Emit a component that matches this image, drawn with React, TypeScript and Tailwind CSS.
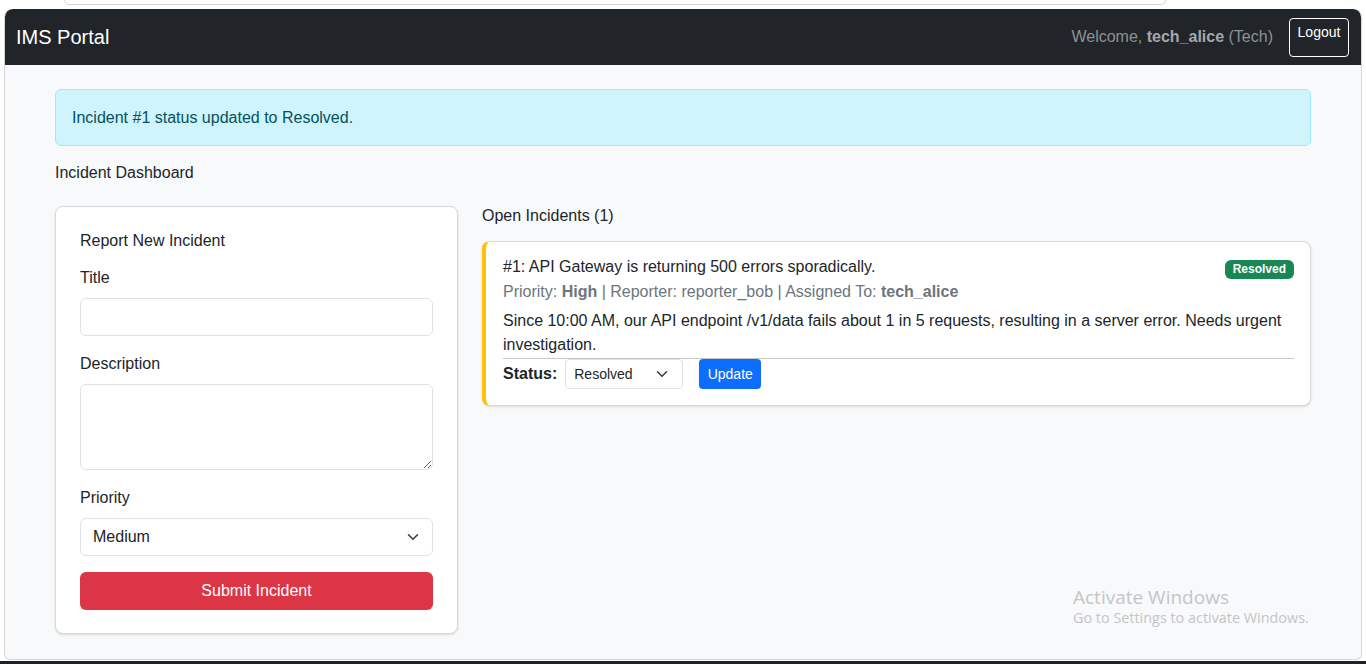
import React from "react";

const chevron = (size: number) => (
  <svg width={size} height={size} viewBox="0 0 16 16" fill="none">
    <path d="m2 5 6 6 6-6" stroke="#343a40" strokeWidth="2" strokeLinecap="round" strokeLinejoin="round" />
  </svg>
);

function Field({ label, children, mb }: { label: string; children: React.ReactNode; mb: string }) {
  return (
    <div className={mb}>
      <div className="pt-[1px] mb-[8px] leading-6">{label}</div>
      {children}
    </div>
  );
}

export default function App() {
  return (
    <div
      className="relative h-[664px] w-[1366px] overflow-hidden bg-white flex flex-col text-[#212529]"
      style={{ fontFamily: '"Liberation Sans", Arial, sans-serif' }}
    >
      {/* browser chrome edge */}
      <div className="h-[9px]">
        <div className="ml-[64px] w-[1102px] h-[5px] border border-t-0 border-[#d4d4d4] rounded-b-[10px]" />
      </div>

      <div className="mx-[4px] h-[651px] rounded-t-lg rounded-b-md border border-t-0 border-[#d6d6d6] bg-[#f8f9fa] flex flex-col overflow-hidden">
        <nav className="h-[56px] bg-[#212529] flex items-center justify-between pl-[11px] pr-[12px] rounded-t-lg">
          <div className="text-white text-[20px]">IMS Portal</div>
          <div className="flex items-center gap-4">
            <span className="text-[16px] text-[#8f9194]">
              Welcome, <b className="text-[#a5a7aa]">tech_alice</b> (Tech)
            </span>
            <button className="w-[60px] h-[39px] border border-white rounded text-white text-[14px] leading-[20px] flex items-start justify-center pt-[3px]">
              Logout
            </button>
          </div>
        </nav>

        <div className="pl-[50px] pr-[50px] pt-[24px]">
          <div className="h-[57px] rounded-md border border-[#9eeaf9] bg-[#cff4fc] text-[#055160] px-4 flex items-center">
            Incident #1 status updated to Resolved.
          </div>
          <div className="mt-[15px] leading-6">Incident Dashboard</div>

          <div className="flex gap-[24px] mt-[21px]">
            <div className="w-[403px] shrink-0">
              <div className="h-[428px] bg-white border border-[#d7d9db] rounded-lg shadow-sm px-[24px] pt-[22px]">
                <div className="leading-6 mb-[12px]">Report New Incident</div>
                <Field label="Title" mb="mb-[15px]">
                  <input className="w-full h-[38px] rounded-md border border-[#dee2e6] outline-none" />
                </Field>
                <Field label="Description" mb="mb-[15px]">
                  <textarea className="block w-full h-[86px] rounded-md border border-[#dee2e6] outline-none" />
                </Field>
                <Field label="Priority" mb="mb-[16px]">
                  <div className="relative">
                    <select className="w-full h-[38px] appearance-none rounded-md border border-[#dee2e6] bg-white pl-[12px] text-[16px] outline-none">
                      <option>Medium</option>
                    </select>
                    <span className="absolute right-[14px] top-[13px]">{chevron(12)}</span>
                  </div>
                </Field>
                <button className="w-full h-[38px] rounded-md bg-[#dc3545] text-white text-[16px]">
                  Submit Incident
                </button>
              </div>
            </div>

            <div className="flex-1 -mt-[2px]">
              <div className="leading-6 mb-[13px]">Open Incidents (1)</div>
              <div className="bg-white border border-[#d7d9db] border-l-4 border-l-[#ffc107] rounded-lg shadow-sm pl-[17px] pr-[16px] pt-[15px] pb-[16px]">
                <div className="flex justify-between items-start">
                  <div className="leading-[19px]">#1: API Gateway is returning 500 errors sporadically.</div>
                  <span className="mt-[3px] h-[19px] px-[8px] rounded-md bg-[#198754] text-white text-[12px] font-bold leading-[19px]">
                    Resolved
                  </span>
                </div>
                <div className="mt-[1px] leading-6 text-[#6c757d]">
                  Priority: <b>High</b> | Reporter: reporter_bob | Assigned To: <b>tech_alice</b>
                </div>
                <p className="mt-[5px] leading-6">
                  Since 10:00 AM, our API endpoint /v1/data fails about 1 in 5 requests, resulting in a server error. Needs urgent investigation.
                </p>
                <div className="mt-[1px] border-t border-[#c8c8c8]" />
                <div className="flex items-center h-[30px]">
                  <b className="mr-[8px]">Status:</b>
                  <div className="relative mr-[16px]">
                    <select className="w-[118px] h-[30px] appearance-none rounded border border-[#dee2e6] bg-white pl-[8px] text-[14px] outline-none">
                      <option>Resolved</option>
                    </select>
                    <span className="absolute right-[15px] top-[9px]">{chevron(12)}</span>
                  </div>
                  <button className="w-[62px] h-[30px] rounded bg-[#0d6efd] text-white text-[14px]">Update</button>
                </div>
              </div>
            </div>
          </div>
        </div>
      </div>

      <div className="mt-[1px] h-[3px] bg-[#202124]" />

      {/* OS watermark overlay */}
      <div
        className="absolute left-[1073px] top-[585px] text-[#c4c5c7]"
        style={{ fontFamily: '"Open Sans", "Noto Sans", sans-serif' }}
      >
        <div className="text-[19px] leading-6">Activate Windows</div>
        <div className="text-[14.4px] leading-5 -mt-[1px]">Go to Settings to activate Windows.</div>
      </div>
    </div>
  );
}
